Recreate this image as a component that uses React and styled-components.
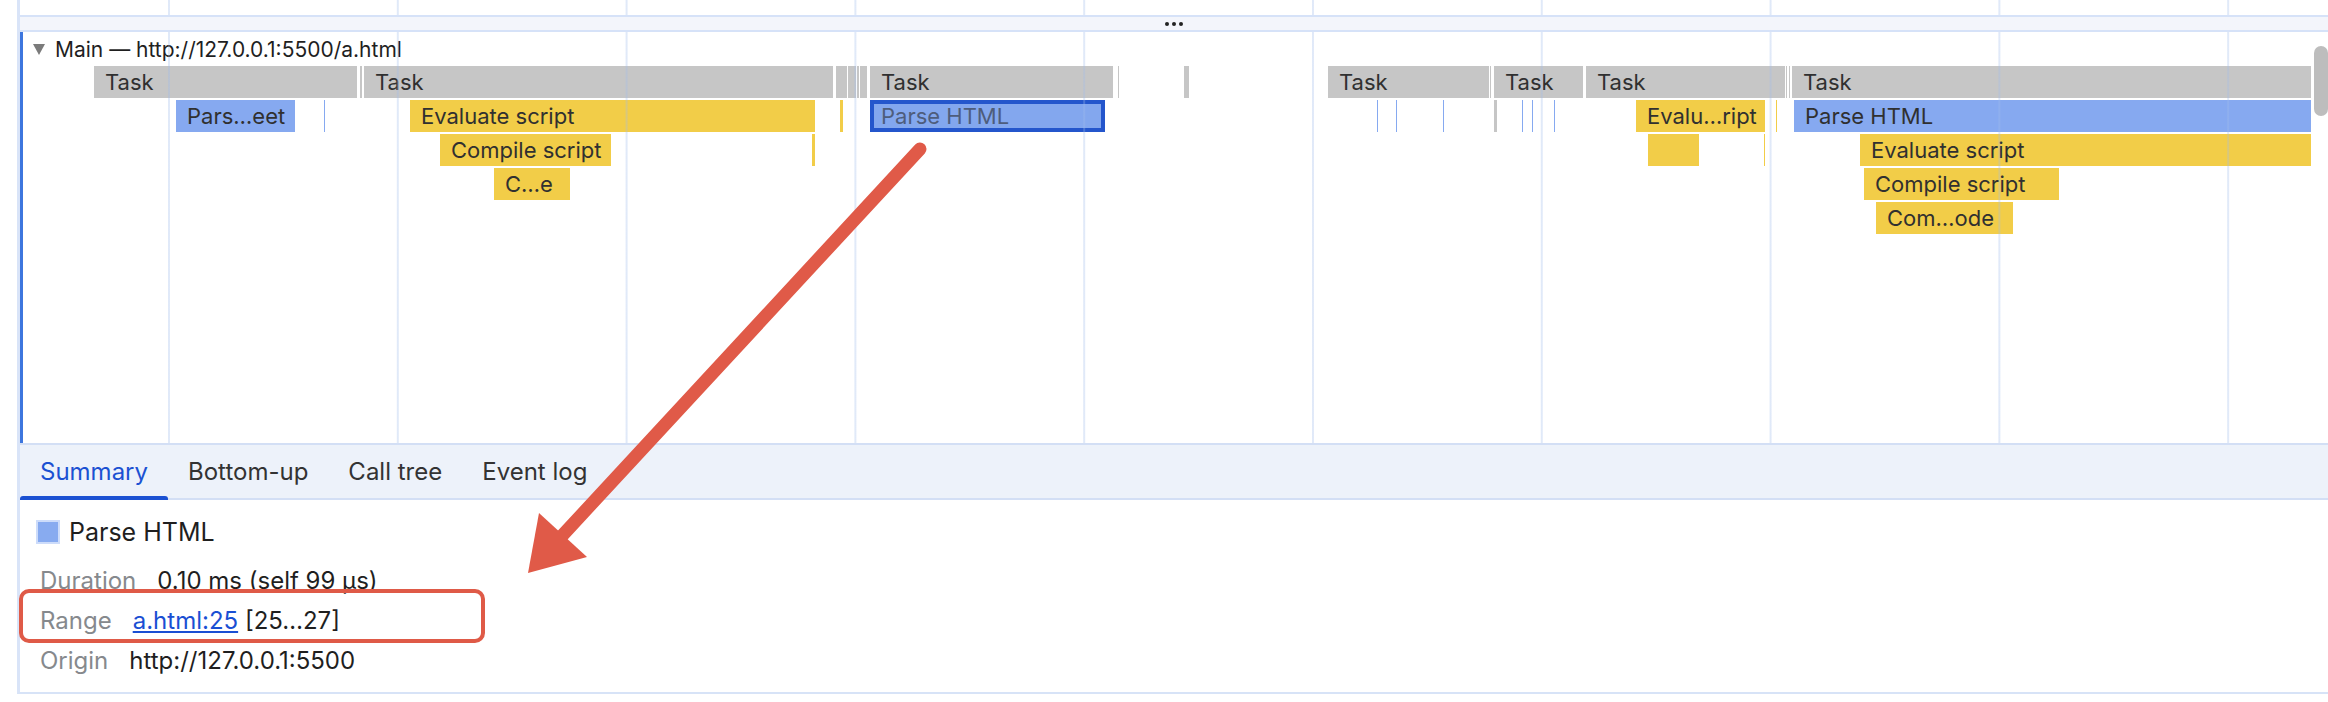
import React from "react";
import styled, { createGlobalStyle, css } from "styled-components";

const GlobalStyle = createGlobalStyle`
  html, body {
    margin: 0;
    padding: 0;
    background: #ffffff;
  }
  body {
    font-family: "Inter", "Roboto", "Liberation Sans", sans-serif;
    color: #1f1f1f;
  }
`;

// x positions are page pixels; the chart canvas starts at x = 23
const ORIGIN = 23;

const rows = [
  [
    { x: 94, w: 263, k: "gray", t: "Task" },
    { x: 360, w: 2, k: "gray" },
    { x: 364, w: 469, k: "gray", t: "Task" },
    { x: 836, w: 11, k: "gray" },
    { x: 848, w: 8, k: "gray" },
    { x: 857, w: 2, k: "gray" },
    { x: 860, w: 7, k: "gray" },
    { x: 870, w: 243, k: "gray", t: "Task" },
    { x: 1118, w: 1, k: "gray" },
    { x: 1184, w: 5, k: "gray" },
    { x: 1328, w: 161, k: "gray", t: "Task" },
    { x: 1490, w: 1, k: "gray" },
    { x: 1494, w: 89, k: "gray", t: "Task" },
    { x: 1586, w: 199, k: "gray", t: "Task" },
    { x: 1786, w: 1, k: "gray" },
    { x: 1789, w: 1, k: "gray" },
    { x: 1792, w: 519, k: "gray", t: "Task" },
  ],
  [
    { x: 176, w: 119, k: "blue", t: "Pars…eet" },
    { x: 324, w: 1, k: "blue" },
    { x: 410, w: 405, k: "yellow", t: "Evaluate script" },
    { x: 840, w: 3, k: "yellow" },
    { x: 870, w: 235, k: "blue", t: "Parse HTML", selected: true },
    { x: 1377, w: 1, k: "blue" },
    { x: 1396, w: 1, k: "blue" },
    { x: 1443, w: 1, k: "blue" },
    { x: 1494, w: 3, k: "gray" },
    { x: 1522, w: 1, k: "blue" },
    { x: 1532, w: 1, k: "blue" },
    { x: 1554, w: 1, k: "blue" },
    { x: 1636, w: 129, k: "yellow", t: "Evalu…ript" },
    { x: 1776, w: 1, k: "yellow" },
    { x: 1794, w: 517, k: "blue", t: "Parse HTML" },
  ],
  [
    { x: 440, w: 171, k: "yellow", t: "Compile script" },
    { x: 812, w: 3, k: "yellow" },
    { x: 1648, w: 51, k: "yellow" },
    { x: 1764, w: 1, k: "yellow" },
    { x: 1860, w: 451, k: "yellow", t: "Evaluate script" },
  ],
  [
    { x: 494, w: 76, k: "yellow", t: "C…e" },
    { x: 1864, w: 195, k: "yellow", t: "Compile script" },
  ],
  [{ x: 1876, w: 137, k: "yellow", t: "Com…ode" }],
];

const tabs = ["Summary", "Bottom-up", "Call tree", "Event log"];

const gridLines = (offset) => css`
  background-image: linear-gradient(
    to right,
    rgba(160, 188, 235, 0.32) 0,
    rgba(160, 188, 235, 0.32) 2px,
    transparent 2px
  );
  background-size: 228.8px 100%;
  background-repeat: repeat-x;
  background-position: ${offset}px 0;
`;

const barColors = {
  gray: "#c6c6c6",
  yellow: "#f2cd48",
  blue: "#86a9f0",
};

export default function App() {
  return (
    <>
      <GlobalStyle />
      <Page>
        <Panel>
          <Ruler />
          <Divider>
            <Dot />
            <Dot />
            <Dot />
          </Divider>
          <Flame>
            <TrackHeader>
              <Caret />
              Main — http://127.0.0.1:5500/a.html
            </TrackHeader>
            {rows.map((row, i) => (
              <Row key={i}>
                {row.map((b, j) => (
                  <Bar
                    key={j}
                    $kind={b.k}
                    $label={!!b.t}
                    $selected={b.selected}
                    style={{ left: b.x - ORIGIN, width: b.w }}
                  >
                    {b.t}
                  </Bar>
                ))}
              </Row>
            ))}
            <Scrollbar />
          </Flame>
          <TabBar>
            {tabs.map((t, i) => (
              <Tab key={t} $active={i === 0}>
                {t}
              </Tab>
            ))}
          </TabBar>
          <Summary>
            <Title>
              <Swatch />
              Parse HTML
            </Title>
            <Detail>
              <Label>Duration</Label>
              <Value>0.10 ms (self 99 µs)</Value>
            </Detail>
            <Detail>
              <Label>Range</Label>
              <Value>
                <Link>a.html:25</Link> [25…27]
              </Value>
            </Detail>
            <Detail>
              <Label>Origin</Label>
              <Value>http://127.0.0.1:5500</Value>
            </Detail>
          </Summary>
        </Panel>

        <Highlight />
        <Arrow viewBox="0 0 2328 702" width="2328" height="702">
          <line
            x1="920"
            y1="149"
            x2="560"
            y2="538"
            stroke="#e05a48"
            strokeWidth="13"
            strokeLinecap="round"
          />
          <polygon points="528,573 539,513 587,557" fill="#e05a48" />
        </Arrow>
      </Page>
    </>
  );
}

const Page = styled.div`
  position: relative;
  width: 2328px;
  height: 702px;
  padding-left: 17px;
  box-sizing: border-box;
  overflow: hidden;
`;

const Panel = styled.div`
  display: flex;
  flex-direction: column;
  border-left: 3px solid #d9e4f8;
  border-bottom: 2px solid #d7e3f7;
`;

const Ruler = styled.div`
  height: 15px;
  border-bottom: 2px solid #d6e2f8;
  ${gridLines(148)}
`;

const Divider = styled.div`
  height: 13px;
  background: #f3f5fb;
  border-bottom: 2px solid #d6e2f8;
  display: flex;
  align-items: center;
  justify-content: center;
  gap: 3px;
`;

const Dot = styled.span`
  width: 4px;
  height: 4px;
  border-radius: 50%;
  background: #222;
`;

const Flame = styled.div`
  position: relative;
  height: 411px;
  border-left: 3px solid #3d76de;

  &::after {
    content: "";
    position: absolute;
    inset: 0;
    pointer-events: none;
    ${gridLines(145)}
  }
`;

const TrackHeader = styled.div`
  display: flex;
  align-items: center;
  height: 34px;
  padding-left: 10px;
  font-size: 21px;
  color: #1f1f1f;
  white-space: nowrap;
`;

const Caret = styled.span`
  width: 0;
  height: 0;
  border-left: 6px solid transparent;
  border-right: 6px solid transparent;
  border-top: 11px solid #7b7b7b;
  margin-right: 10px;
`;

const Row = styled.div`
  position: relative;
  height: 32px;
  margin-bottom: 2px;
`;

const Bar = styled.div`
  position: absolute;
  top: 0;
  height: 32px;
  box-sizing: border-box;
  padding-left: ${(p) => (p.$label ? "11px" : "0")};
  background: ${(p) => barColors[p.$kind]};
  color: #303030;
  font-size: 22px;
  line-height: 32px;
  white-space: nowrap;
  overflow: hidden;

  ${(p) =>
    p.$selected &&
    css`
      border: 4px solid #2456cc;
      padding-left: 7px;
      line-height: 24px;
      color: #4e5d7c;
      background: #83a7ee;
    `}
`;

const Scrollbar = styled.div`
  position: absolute;
  right: 0;
  top: 14px;
  width: 14px;
  height: 70px;
  border-radius: 7px;
  background: #bdbdbd;
  z-index: 1;
`;

const TabBar = styled.div`
  display: flex;
  height: 53px;
  background: #edf2fa;
  border-top: 2px solid #d3dff5;
  border-bottom: 2px solid #d3dff5;
`;

const Tab = styled.div`
  position: relative;
  display: flex;
  align-items: center;
  padding: 0 20px;
  font-size: 24px;
  color: ${(p) => (p.$active ? "#1b51d2" : "#333333")};

  ${(p) =>
    p.$active &&
    css`
      &::after {
        content: "";
        position: absolute;
        left: 0;
        right: 0;
        bottom: -2px;
        height: 4px;
        border-radius: 3px 3px 0 0;
        background: #1b51d2;
      }
    `}
`;

const Summary = styled.div`
  display: flex;
  flex-direction: column;
  height: 192px;
  padding-left: 20px;
`;

const Title = styled.div`
  display: flex;
  align-items: center;
  height: 24px;
  margin: 20px 0 16px -4px;
  font-size: 25px;
  color: #1f1f1f;
`;

const Swatch = styled.span`
  width: 20px;
  height: 20px;
  background: #88abf0;
  border: 2px solid #cddcfa;
  margin-right: 9px;
`;

const Detail = styled.div`
  display: flex;
  align-items: center;
  height: 40px;
  font-size: 24px;
  white-space: nowrap;
`;

const Label = styled.span`
  color: #86898d;
  margin-right: 21px;
`;

const Value = styled.span`
  color: #1f1f1f;
`;

const Link = styled.span`
  color: #1a4fd3;
  text-decoration: underline;
`;

const Highlight = styled.div`
  position: absolute;
  left: 19px;
  top: 589px;
  width: 466px;
  height: 54px;
  box-sizing: border-box;
  border: 4px solid #df5a47;
  border-radius: 10px;
  pointer-events: none;
`;

const Arrow = styled.svg`
  position: absolute;
  left: 0;
  top: 0;
  pointer-events: none;
`;
